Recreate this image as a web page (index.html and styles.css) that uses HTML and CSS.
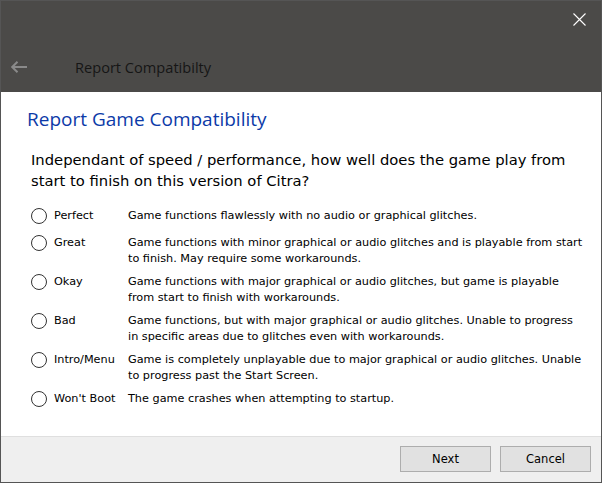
FILE: index.html
```html
<!DOCTYPE html>
<html lang="en">
<head>
<meta charset="utf-8">
<title>Report Compatibilty</title>
<link rel="stylesheet" href="styles.css">
</head>
<body>
<div class="window">
  <header class="titlebar">
    <div class="titlebar-top">
      <button class="close" aria-label="Close">
        <svg width="13" height="13" viewBox="0 0 13 13"><path d="M0.5 0.5 L12.5 12.5 M12.5 0.5 L0.5 12.5" stroke="#ffffff" stroke-width="1.1" fill="none"/></svg>
      </button>
    </div>
    <div class="titlebar-bottom">
      <svg class="back" width="17" height="12" viewBox="0 0 17 12"><path d="M1 6 H16 M6.5 0.8 L1.2 6 L6.5 11.2" stroke="#8a8a8a" stroke-width="2" fill="none"/></svg>
      <span class="title">Report Compatibilty</span>
    </div>
  </header>
  <main class="content">
    <h1 class="heading">Report Game Compatibility</h1>
    <p class="question">Independant of speed / performance, how well does the game play from start to finish on this version of Citra?</p>
    <div class="options">
      <label class="option"><span class="radio"></span><span class="label">Perfect</span><span class="desc">Game functions flawlessly with no audio or graphical glitches.</span></label>
      <label class="option"><span class="radio"></span><span class="label">Great</span><span class="desc">Game functions with minor graphical or audio glitches and is playable from start<br>to finish. May require some workarounds.</span></label>
      <label class="option"><span class="radio"></span><span class="label">Okay</span><span class="desc">Game functions with major graphical or audio glitches, but game is playable<br>from start to finish with workarounds.</span></label>
      <label class="option"><span class="radio"></span><span class="label">Bad</span><span class="desc">Game functions, but with major graphical or audio glitches. Unable to progress<br>in specific areas due to glitches even with workarounds.</span></label>
      <label class="option"><span class="radio"></span><span class="label">Intro/Menu</span><span class="desc">Game is completely unplayable due to major graphical or audio glitches. Unable<br>to progress past the Start Screen.</span></label>
      <label class="option"><span class="radio"></span><span class="label">Won't Boot</span><span class="desc">The game crashes when attempting to startup.</span></label>
    </div>
  </main>
  <footer class="footer">
    <button class="btn">Next</button>
    <button class="btn">Cancel</button>
  </footer>
</div>
</body>
</html>
```

FILE: styles.css
```css
* { box-sizing: border-box; }
html, body { margin: 0; padding: 0; background: #ffffff; }
.window {
  width: 602px;
  height: 483px;
  border: 1px solid #555555;
  display: flex;
  flex-direction: column;
  background: #ffffff;
  overflow: hidden;
}
.titlebar {
  height: 91px;
  background: #4b4a48;
  display: flex;
  flex-direction: column;
}
.titlebar-top {
  display: flex;
  justify-content: flex-end;
  padding: 12px 15px 0 0;
  height: 44px;
}
.close {
  width: 13px;
  height: 13px;
  padding: 0;
  border: 0;
  background: transparent;
  display: block;
}
.close svg { display: block; }
.titlebar-bottom {
  display: flex;
  align-items: center;
  height: 44px;
  padding: 0 0 0 10px;
}
.back { display: block; }
.title {
  margin-left: 47px;
  font-family: "Open Sans", sans-serif;
  font-size: 14.6px;
  color: #161616;
}
.content {
  flex: 1;
  padding: 14px 0 0 26px;
}
.heading {
  margin: 0;
  font-family: "Open Sans", sans-serif;
  font-weight: normal;
  font-size: 19px;
  line-height: 26px;
  color: #0c3aa8;
}
.question {
  margin: 17px 0 0 4px;
  font-family: "DejaVu Sans", sans-serif;
  font-size: 14.75px;
  line-height: 21px;
  color: #000000;
}
.options {
  margin: 15px 0 0 4px;
  display: flex;
  flex-direction: column;
  gap: 5px;
}
.option {
  display: grid;
  grid-template-columns: 23px 74px 1fr;
  align-items: start;
  min-height: 22px;
  font-family: "DejaVu Sans", sans-serif;
  font-size: 11.25px;
  line-height: 16px;
  color: #000000;
}
.radio {
  width: 16px;
  height: 16px;
  border: 1px solid #333333;
  border-radius: 50%;
  background: #ffffff;
  margin-top: 2px;
}
.label { padding-top: 2px; white-space: nowrap; }
.desc { padding-top: 2px; white-space: nowrap; }
.footer {
  height: 46px;
  border-top: 1px solid #dfdfdf;
  background: #efefef;
  display: flex;
  justify-content: flex-end;
  gap: 9px;
  padding: 9px 10px 0 0;
}
.btn {
  width: 91px;
  height: 26px;
  border: 1px solid #adadad;
  background: #e1e1e1;
  font-family: "DejaVu Sans", sans-serif;
  font-size: 11.5px;
  color: #000000;
  padding: 0;
}
```
